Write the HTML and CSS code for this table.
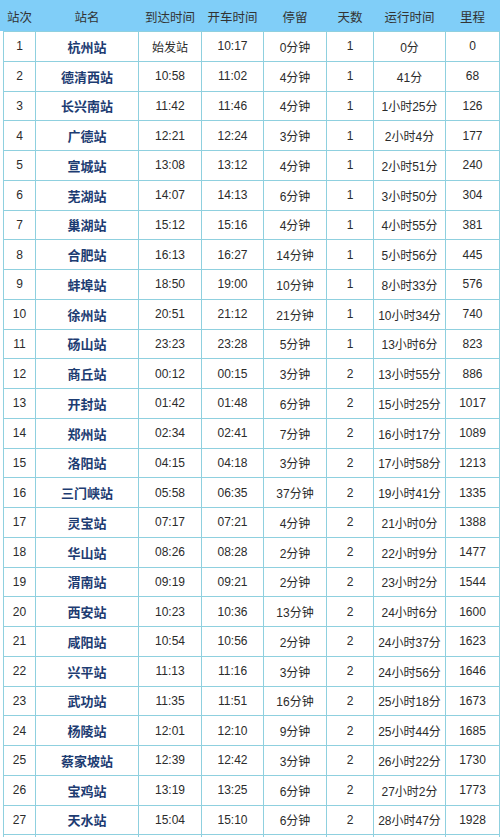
FILE: index.html
```html
<!DOCTYPE html>
<html lang="zh-CN">
<head>
<meta charset="utf-8">
<title>列车时刻表</title>
<link rel="stylesheet" href="styles.css">
</head>
<body>
<div class="sheet">
<table class="timetable">
<colgroup>
<col class="c1"><col class="c2"><col class="c3"><col class="c4"><col class="c5"><col class="c6"><col class="c7"><col class="c8">
</colgroup>
<thead>
<tr><th>站次</th><th>站名</th><th>到达时间</th><th>开车时间</th><th>停留</th><th>天数</th><th>运行时间</th><th>里程</th></tr>
</thead>
<tbody>
<tr><td>1</td><td class="st">杭州站</td><td>始发站</td><td>10:17</td><td>0分钟</td><td>1</td><td>0分</td><td>0</td></tr>
<tr><td>2</td><td class="st">德清西站</td><td>10:58</td><td>11:02</td><td>4分钟</td><td>1</td><td>41分</td><td>68</td></tr>
<tr><td>3</td><td class="st">长兴南站</td><td>11:42</td><td>11:46</td><td>4分钟</td><td>1</td><td>1小时25分</td><td>126</td></tr>
<tr><td>4</td><td class="st">广德站</td><td>12:21</td><td>12:24</td><td>3分钟</td><td>1</td><td>2小时4分</td><td>177</td></tr>
<tr><td>5</td><td class="st">宣城站</td><td>13:08</td><td>13:12</td><td>4分钟</td><td>1</td><td>2小时51分</td><td>240</td></tr>
<tr><td>6</td><td class="st">芜湖站</td><td>14:07</td><td>14:13</td><td>6分钟</td><td>1</td><td>3小时50分</td><td>304</td></tr>
<tr><td>7</td><td class="st">巢湖站</td><td>15:12</td><td>15:16</td><td>4分钟</td><td>1</td><td>4小时55分</td><td>381</td></tr>
<tr><td>8</td><td class="st">合肥站</td><td>16:13</td><td>16:27</td><td>14分钟</td><td>1</td><td>5小时56分</td><td>445</td></tr>
<tr><td>9</td><td class="st">蚌埠站</td><td>18:50</td><td>19:00</td><td>10分钟</td><td>1</td><td>8小时33分</td><td>576</td></tr>
<tr><td>10</td><td class="st">徐州站</td><td>20:51</td><td>21:12</td><td>21分钟</td><td>1</td><td>10小时34分</td><td>740</td></tr>
<tr><td>11</td><td class="st">砀山站</td><td>23:23</td><td>23:28</td><td>5分钟</td><td>1</td><td>13小时6分</td><td>823</td></tr>
<tr><td>12</td><td class="st">商丘站</td><td>00:12</td><td>00:15</td><td>3分钟</td><td>2</td><td>13小时55分</td><td>886</td></tr>
<tr><td>13</td><td class="st">开封站</td><td>01:42</td><td>01:48</td><td>6分钟</td><td>2</td><td>15小时25分</td><td>1017</td></tr>
<tr><td>14</td><td class="st">郑州站</td><td>02:34</td><td>02:41</td><td>7分钟</td><td>2</td><td>16小时17分</td><td>1089</td></tr>
<tr><td>15</td><td class="st">洛阳站</td><td>04:15</td><td>04:18</td><td>3分钟</td><td>2</td><td>17小时58分</td><td>1213</td></tr>
<tr><td>16</td><td class="st">三门峡站</td><td>05:58</td><td>06:35</td><td>37分钟</td><td>2</td><td>19小时41分</td><td>1335</td></tr>
<tr><td>17</td><td class="st">灵宝站</td><td>07:17</td><td>07:21</td><td>4分钟</td><td>2</td><td>21小时0分</td><td>1388</td></tr>
<tr><td>18</td><td class="st">华山站</td><td>08:26</td><td>08:28</td><td>2分钟</td><td>2</td><td>22小时9分</td><td>1477</td></tr>
<tr><td>19</td><td class="st">渭南站</td><td>09:19</td><td>09:21</td><td>2分钟</td><td>2</td><td>23小时2分</td><td>1544</td></tr>
<tr><td>20</td><td class="st">西安站</td><td>10:23</td><td>10:36</td><td>13分钟</td><td>2</td><td>24小时6分</td><td>1600</td></tr>
<tr><td>21</td><td class="st">咸阳站</td><td>10:54</td><td>10:56</td><td>2分钟</td><td>2</td><td>24小时37分</td><td>1623</td></tr>
<tr><td>22</td><td class="st">兴平站</td><td>11:13</td><td>11:16</td><td>3分钟</td><td>2</td><td>24小时56分</td><td>1646</td></tr>
<tr><td>23</td><td class="st">武功站</td><td>11:35</td><td>11:51</td><td>16分钟</td><td>2</td><td>25小时18分</td><td>1673</td></tr>
<tr><td>24</td><td class="st">杨陵站</td><td>12:01</td><td>12:10</td><td>9分钟</td><td>2</td><td>25小时44分</td><td>1685</td></tr>
<tr><td>25</td><td class="st">蔡家坡站</td><td>12:39</td><td>12:42</td><td>3分钟</td><td>2</td><td>26小时22分</td><td>1730</td></tr>
<tr><td>26</td><td class="st">宝鸡站</td><td>13:19</td><td>13:25</td><td>6分钟</td><td>2</td><td>27小时2分</td><td>1773</td></tr>
<tr><td>27</td><td class="st">天水站</td><td>15:04</td><td>15:10</td><td>6分钟</td><td>2</td><td>28小时47分</td><td>1928</td></tr>
<tr class="tail"><td></td><td></td><td></td><td></td><td></td><td></td><td></td><td></td></tr>
</tbody>
</table>
</div>
</body>
</html>
```

FILE: styles.css
```css
html, body {
  margin: 0;
  padding: 0;
  background: #ffffff;
}

body {
  font-family: "Liberation Sans", "Noto Sans CJK SC", sans-serif;
  font-size: 12px;
  color: #2b2b2b;
}

.sheet {
  width: 500px;
  padding-left: 3px;
  box-sizing: border-box;
  background: linear-gradient(#80cef8, #80cef8) top left / 100% 31px no-repeat;
}

.timetable {
  width: 497px;
  table-layout: fixed;
  border-collapse: collapse;
}

.c1 { width: 32px; }
.c2 { width: 103px; }
.c3 { width: 63px; }
.c4 { width: 62px; }
.c5 { width: 63px; }
.c6 { width: 47px; }
.c7 { width: 72px; }
.c8 { width: 54px; }

.timetable thead tr {
  height: 31px;
}

.timetable th {
  background: #80cef8;
  border: 1px solid #80cef8;
  border-bottom-color: #8fd0df;
  font-weight: normal;
  font-size: 12.5px;
  color: #333333;
  padding: 0;
  text-align: center;
  white-space: nowrap;
}

.timetable tbody tr {
  height: 29.75px;
}

.timetable td {
  border: 1px solid #8fd0df;
  padding: 0;
  text-align: center;
  white-space: nowrap;
  overflow: hidden;
}

.timetable td.st {
  font-weight: bold;
  color: #1d3c72;
  font-size: 13px;
}
```
